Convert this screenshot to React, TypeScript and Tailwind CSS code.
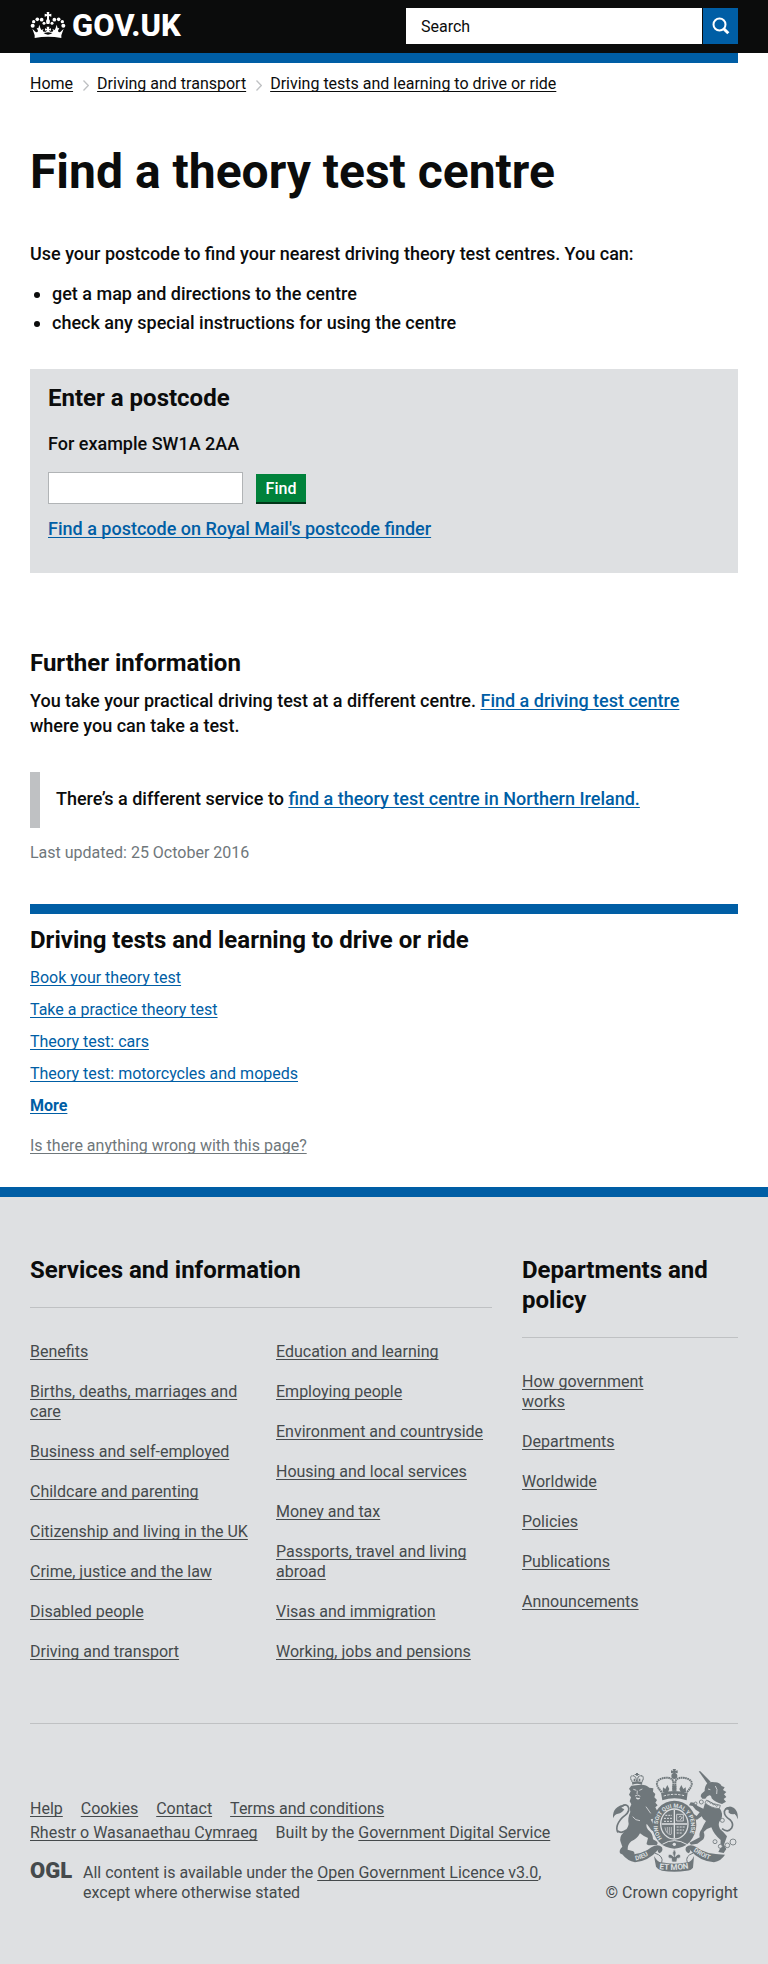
import type { ReactNode } from "react";

const serviceLinks = [
  [
    "Benefits",
    "Births, deaths, marriages and care",
    "Business and self-employed",
    "Childcare and parenting",
    "Citizenship and living in the UK",
    "Crime, justice and the law",
    "Disabled people",
    "Driving and transport",
  ],
  [
    "Education and learning",
    "Employing people",
    "Environment and countryside",
    "Housing and local services",
    "Money and tax",
    "Passports, travel and living abroad",
    "Visas and immigration",
    "Working, jobs and pensions",
  ],
];

const departmentLinks = [
  "How government works",
  "Departments",
  "Worldwide",
  "Policies",
  "Publications",
  "Announcements",
];

const relatedLinks = [
  "Book your theory test",
  "Take a practice theory test",
  "Theory test: cars",
  "Theory test: motorcycles and mopeds",
];

const breadcrumbs = [
  "Home",
  "Driving and transport",
  "Driving tests and learning to drive or ride",
];

const underline =
  "underline decoration-1 underline-offset-2 [text-decoration-skip-ink:none]";

function Link({ children, className = "" }: { children: ReactNode; className?: string }) {
  return (
    <a href="#" className={`${underline} ${className}`}>
      {children}
    </a>
  );
}

function LinkList({ items, className = "" }: { items: string[]; className?: string }) {
  return (
    <ul className={`flex flex-col gap-5 ${className}`}>
      {items.map((item) => (
        <li key={item}>
          <Link>{item}</Link>
        </li>
      ))}
    </ul>
  );
}

function Crown() {
  const half = (
    <g>
      <circle cx="98" cy="77" r="6" />
      <circle cx="101" cy="65" r="5" />
      <circle cx="112" cy="58" r="5.5" />
      <circle cx="125" cy="59" r="5.5" />
      <circle cx="132" cy="70" r="4.5" />
      <path d="M97 86 L104 106 L104 114 Q124 110 144 110 L144 104 Q134 103 131 99 L144 97 L144 80 L140 80 L141 87 L135 85 L135 92 L141 90 L138 95 Q131 97 128 92 L131 87 L124 90 L121 84 L118 74 L115 85 L110 84 L114 92 Q113 98 107 96 Z" />
    </g>
  );
  return (
    <svg viewBox="91 36 106 78" className="h-[26px] w-[36px]" fill="white" aria-hidden="true">
      {half}
      <g transform="matrix(-1 0 0 1 288 0)">{half}</g>
      <path d="M140 36 H148 L147 43 L154 41 V50 L147 48 V58 Q152 62 148 72 H140 Q136 62 141 58 V48 L134 50 V41 L141 43 Z" />
    </svg>
  );
}

function SmallCrown() {
  return (
    <g stroke="none">
      <path d="M126 96 Q141 91 157 96 L156 104 Q141 99 127 104 Z" />
      <g fill="none" stroke="#6f777b" strokeWidth="3.5" strokeDasharray="3.5 1">
        <path d="M127 95 Q116 80 128 77 Q138 77 140 94" />
        <path d="M156 95 Q165 80 153 77 Q143 77 141 94" />
      </g>
      <path d="M138 69 h6 v8 h-6z M134 72 h14 v3 h-14z M131 86 h5 v7 h-5z M146 86 h5 v7 h-5z" />
    </g>
  );
}

function Crest() {
  return (
    <svg
      viewBox="69 54 375 312"
      className="h-[104px] w-[125px]"
      fill="#6f777b"
      stroke="#6f777b"
      strokeWidth="0"
      role="img"
      aria-label="Royal coat of arms"
    >
      <defs>
        <path id="garter-motto" d="M216 265 A50 55 0 1 1 292 263" />
        <path id="ribbon-left" d="M137 331 Q164 326 192 304" />
        <path id="ribbon-mid" d="M208 357 Q253 363 299 355" />
        <path id="ribbon-right" d="M310 303 Q342 327 374 332" />
      </defs>

      {/* Lion */}
      <SmallCrown />
      <path d="M124 107 L117 116 L122 124 L117 134 L123 142 L119 154 L124 163 L119 174 L121 186 Q112 204 116 222 Q114 236 100 248 Q87 260 92 276 L97 290 Q86 300 90 310 L100 315 L128 317 Q138 312 130 304 L113 299 Q112 284 124 274 Q142 266 150 250 Q162 260 174 264 L171 276 Q167 284 176 286 L200 285 Q207 278 197 272 L189 268 Q188 252 179 244 Q166 232 170 221 L184 240 L198 250 L205 241 L193 230 L182 208 L204 204 L214 192 L202 184 L196 172 L203 166 L196 158 L201 150 L193 142 L196 132 L189 125 L190 115 L178 113 Q168 103 152 104 Z" />
      <path
        d="M84 247 Q78 240 82 226 Q88 208 105 196 Q122 182 114 169 Q107 161 97 168 M83 243 Q94 252 110 240"
        fill="none"
        strokeWidth="5"
      />
      <path d="M69 205 Q67 182 82 172 Q93 161 107 165 L94 173 L103 178 Q96 190 84 191 Q73 193 69 205Z" />
      <g stroke="#dee0e2" fill="none" strokeWidth="2.5">
        <path d="M130 118 l9 3 M148 121 l9 -4 M142 122 l-1 10 M135 138 l8 -3 l8 4 M168 170 l14 20 M128 200 q8 12 22 12" />
        <path d="M139 143 q4 6 10 1" strokeWidth="4" />
      </g>

      {/* Unicorn */}
      <path d="M326 64 L331 64 L362 95 L353 102Z" />
      <path d="M352 100 Q362 94 374 97 Q388 96 395 108 L404 112 L399 120 L409 126 L402 133 L409 141 L401 147 L408 155 L396 162 Q376 158 365 145 Q364 136 358 136 Q350 138 346 146 L337 146 L332 139 L334 132 L344 123 Q344 108 352 100Z" />
      <path d="M345 160 L390 176 Q401 192 393 208 Q381 222 390 237 Q402 247 411 259 L402 284 L409 297 L401 309 L385 306 L391 294 L392 270 Q372 254 364 232 Q349 236 341 246 Q346 258 340 268 L322 281 L303 284 L298 278 L318 268 L329 262 Q326 248 335 238 Q342 222 348 213 Q338 208 335 199 L321 209 L309 205 L303 192 L312 193 L320 198 L329 187 L317 179 L308 168 L297 166 L302 157 L313 158 L323 168 L340 176 Z" />
      <path d="M396 236 Q414 250 425 234 Q432 222 421 210 Q402 198 403 184 Q408 171 424 173" fill="none" strokeWidth="5" />
      <path d="M443 208 Q446 186 432 174 Q418 165 404 176 L416 180 L416 188 Q424 194 434 192 Q440 196 443 208Z" />
      <g fill="#dee0e2" strokeWidth="2.5">
        <path d="M350 150 Q368 163 391 166 L388 176 Q360 174 345 158Z" />
        <path d="M352 156 l5 -3 l4 7 l5 -2 l4 7 l5 -2 l4 6 l6 -3" fill="none" />
        <circle cx="334" cy="156" r="6" />
        <circle cx="317" cy="160" r="4" />
        <circle cx="397" cy="211" r="6" />
        <circle cx="375" cy="275" r="6" />
        <circle cx="391" cy="289" r="6" />
        <circle cx="412" cy="286" r="7" />
        <circle cx="429" cy="276" r="9" />
      </g>
      <path d="M354 117 l7 2 M376 108 q8 10 4 24" stroke="#dee0e2" strokeWidth="2.5" fill="none" />

      {/* Ribbon */}
      <path d="M98 314 Q158 316 184 292 Q204 280 216 292 Q221 304 208 310 Q200 304 206 298 Q176 334 135 337 Q112 332 98 314Z" />
      <path d="M405 314 Q345 314 320 292 Q300 280 288 292 Q283 304 296 310 Q304 304 298 298 Q328 334 372 337 Q394 332 405 314Z" />
      <path d="M192 318 Q204 338 214 337 Q253 345 293 337 Q304 336 312 318 L309 353 Q302 362 290 362 Q253 368 216 362 Q204 360 198 350Z" />
      <path d="M194 309 Q222 318 215 338 M310 309 Q284 318 292 338" fill="none" strokeWidth="3" />

      {/* Garter and shield */}
      <ellipse cx="253" cy="224" rx="66" ry="72" />
      <ellipse cx="253" cy="222" rx="43" ry="47" fill="#dee0e2" />
      <ellipse cx="253" cy="222" rx="39" ry="43" />
      <g stroke="#dee0e2" fill="none" strokeWidth="3">
        <path d="M253 180 V264 M215 222 H291" strokeWidth="4" />
        <path d="M226 196 h20 M222 205 h24 M222 214 h24" strokeDasharray="6 3" />
        <path d="M260 193 h20 v20 h-20z M266 202 l5 -4 l6 6 l-7 5" strokeWidth="2.5" />
        <path d="M225 232 q2 20 18 22 M232 231 v17 M238 231 v20 M244 231 v22" strokeWidth="2" />
        <path d="M260 231 h24 M260 240 h22 M260 249 h18" strokeDasharray="6 3" />
        <path d="M217 283 Q253 260 292 284" />
      </g>
      <circle cx="253" cy="283" r="5" fill="#dee0e2" />
      <path d="M253 298 q9 10 2 22 q13 -14 17 -2 q0 9 -10 7 l-2 11 h-14 l-2 -11 q-10 2 -10 -7 q4 -12 17 2 q-7 -12 2 -22z" stroke="#dee0e2" strokeWidth="2" />

      {/* Royal crown */}
      <path d="M213 128 Q253 118 293 128 L290 151 Q253 139 217 151 Z" />
      <path d="M221 138 Q253 128 286 138" fill="none" stroke="#dee0e2" strokeWidth="3" strokeDasharray="7 4" />
      <g fill="none" strokeWidth="6" strokeDasharray="5 1.5">
        <path d="M215 126 Q190 100 209 88 Q238 76 250 93 L250 122" />
        <path d="M291 126 Q316 100 297 88 Q268 76 256 93 L256 122" />
      </g>
      <circle cx="253" cy="78" r="9" />
      <path d="M248 57 h10 l-2 6 l7 -2 v9 l-7 -2 v7 h-6 v-7 l-7 2 v-9 l7 2z M247 106 h12 v16 h-12z M219 112 l7 5 l6 -12 l6 12 l-4 9 h-16z M287 112 l-7 5 l-6 -12 l-6 12 l4 9 h16z" />

      <g fill="#dee0e2" fontFamily="Roboto, sans-serif" fontWeight="700" fontSize="19">
        <text fontSize="17"><textPath href="#garter-motto">HONI SOIT QUI MAL Y PENSE</textPath></text>
        <text><textPath href="#ribbon-left">DIEU</textPath></text>
        <text fontSize="24"><textPath href="#ribbon-mid">ET MON</textPath></text>
        <text><textPath href="#ribbon-right">DROIT</textPath></text>
      </g>
    </svg>
  );
}

export default function App() {
  return (
    <div className="bg-white font-[Roboto,sans-serif] text-[16px] leading-5 text-[#0b0c0c]">
      <header className="bg-[#0b0c0c]">
        <div className="flex items-start justify-between px-[30px] pt-2 pb-[9px]">
          <a href="#" className="flex h-9 items-start gap-[6px] text-white" aria-label="GOV.UK">
            <span className="pt-1">
              <Crown />
            </span>
            <span className="text-[31px] leading-9 font-extrabold">GOV.UK</span>
          </a>
          <form className="flex w-[332px] gap-px" onSubmit={(e) => e.preventDefault()}>
            <input
              type="text"
              aria-label="Search"
              placeholder="Search"
              className="h-9 min-w-0 flex-1 bg-white px-[15px] text-[16px] outline-none placeholder:text-[#0b0c0c] placeholder:opacity-100"
            />
            <button
              type="submit"
              aria-label="Search GOV.UK"
              className="flex h-9 w-[35px] items-center justify-center bg-[#005ea5]"
            >
              <svg viewBox="0 0 18 18" className="size-[18px]" fill="none" stroke="white">
                <circle cx="7.5" cy="7.5" r="6" strokeWidth="2" />
                <path d="M11.5 11.5 L16.3 16.3" strokeWidth="3" />
              </svg>
            </button>
          </form>
        </div>
      </header>

      <div className="px-[30px]">
        <div className="h-[10px] bg-[#005ea5]" />
        <nav aria-label="Breadcrumb" className="pt-[11px]">
          <ol className="flex flex-wrap items-center">
            {breadcrumbs.map((crumb, i) => (
              <li key={crumb} className="flex items-center">
                {i > 0 && (
                  <svg viewBox="0 0 6 11" className="mr-2 ml-[10px] mt-[2px] h-[11px] w-[6px]" fill="none" stroke="#bfc1c3" strokeWidth="1.3">
                    <path d="M0.5 0.5 L5.3 5.5 L0.5 10.5" />
                  </svg>
                )}
                <Link>{crumb}</Link>
              </li>
            ))}
          </ol>
        </nav>

        <main>
          <h1 className="mt-[53px] text-[48px] leading-[50px] font-bold">Find a theory test centre</h1>

          <div className="mt-11 text-[18px] leading-[25px] font-medium">
            <p>Use your postcode to find your nearest driving theory test centres. You can:</p>
            <ul className="mt-[15px] flex list-disc flex-col gap-1 pl-[22px]">
              <li>get a map and directions to the centre</li>
              <li>check any special instructions for using the centre</li>
            </ul>

            <form className="mt-[34px] bg-[#dee0e2] px-[18px] pt-[14px] pb-8" onSubmit={(e) => e.preventDefault()}>
              <h2 className="text-[24px] leading-[30px] font-bold">Enter a postcode</h2>
              <label htmlFor="postcode" className="mt-[18px] block">
                For example SW1A 2AA
              </label>
              <div className="mt-4 flex items-end gap-[13px]">
                <input
                  id="postcode"
                  type="text"
                  className="h-8 w-[195px] border border-[#b1b4b6] bg-white px-1 outline-none"
                />
                <button
                  type="submit"
                  className="h-[30px] w-[50px] bg-[#00823b] text-[16px] leading-7 font-medium text-white shadow-[inset_0_-2px_0_#003618]"
                >
                  Find
                </button>
              </div>
              <p className="mt-3">
                <Link className="text-[#005ea5]">Find a postcode on Royal Mail&#39;s postcode finder</Link>
              </p>
            </form>

            <h2 className="mt-[75px] text-[24px] leading-[30px] font-bold">Further information</h2>
            <p className="mt-[10px]">
              You take your practical driving test at a different centre.{" "}
              <Link className="text-[#005ea5]">Find a driving test centre</Link>
              <br />
              where you can take a test.
            </p>
            <div className="mt-[34px] border-l-[10px] border-[#bfc1c3] pt-[14px] pb-[17px] pl-4">
              <p>
                There’s a different service to{" "}
                <Link className="text-[#005ea5]">find a theory test centre in Northern Ireland.</Link>
              </p>
            </div>
          </div>
          <p className="mt-[15px] text-[#6f777b]">Last updated: 25 October 2016</p>
        </main>

        <aside className="mt-[41px] border-t-[10px] border-[#005ea5] pt-[11px]">
          <h2 className="text-[24px] leading-[30px] font-bold">Driving tests and learning to drive or ride</h2>
          <ul className="mt-[13px] flex flex-col gap-3 text-[#005ea5]">
            {relatedLinks.map((item) => (
              <li key={item}>
                <Link>{item}</Link>
              </li>
            ))}
            <li>
              <Link className="font-bold">More</Link>
            </li>
          </ul>
        </aside>
        <p className="mt-5 mb-[31px] text-[#6f777b]">
          <Link>Is there anything wrong with this page?</Link>
        </p>
      </div>

      <footer className="border-t-[10px] border-[#005ea5] bg-[#dee0e2] px-[30px] pt-[58px] pb-[61px] text-[#454a4c]">
        <div className="grid grid-cols-[462fr_216fr] gap-[30px]">
          <section>
            <h2 className="border-b border-[#bfc1c3] pb-[22px] text-[24px] leading-[30px] font-bold text-[#0b0c0c]">
              Services and information
            </h2>
            <div className="mt-[34px] grid grid-cols-2 gap-5">
              <LinkList items={serviceLinks[0]} />
              <LinkList items={serviceLinks[1]} className="pl-[5px]" />
            </div>
          </section>
          <section>
            <h2 className="border-b border-[#bfc1c3] pb-[22px] text-[24px] leading-[30px] font-bold text-[#0b0c0c]">
              Departments and policy
            </h2>
            <LinkList items={departmentLinks} className="mt-[34px] w-[140px]" />
          </section>
        </div>

        <div className="mt-[61px] flex items-end justify-between border-t border-[#bfc1c3] pt-11">
          <div>
            <ul className="flex flex-wrap gap-x-[18px] gap-y-1">
              <li><Link>Help</Link></li>
              <li><Link>Cookies</Link></li>
              <li><Link>Contact</Link></li>
              <li><Link>Terms and conditions</Link></li>
            </ul>
            <ul className="mt-1 flex flex-wrap gap-x-[18px] gap-y-1">
              <li><Link>Rhestr o Wasanaethau Cymraeg</Link></li>
              <li>
                Built by the <Link>Government Digital Service</Link>
              </li>
            </ul>
            <div className="mt-5 flex items-start">
              <a href="#" aria-label="Open Government Licence" className="w-[53px] shrink-0 text-[22px] leading-4 font-black">
                OGL
              </a>
              <p>
                All content is available under the <Link>Open Government Licence v3.0</Link>,
                <br />
                except where otherwise stated
              </p>
            </div>
          </div>
          <a href="#" className="flex shrink-0 flex-col items-end gap-[11px]">
            <Crest />
            <span>© Crown copyright</span>
          </a>
        </div>
      </footer>
    </div>
  );
}
